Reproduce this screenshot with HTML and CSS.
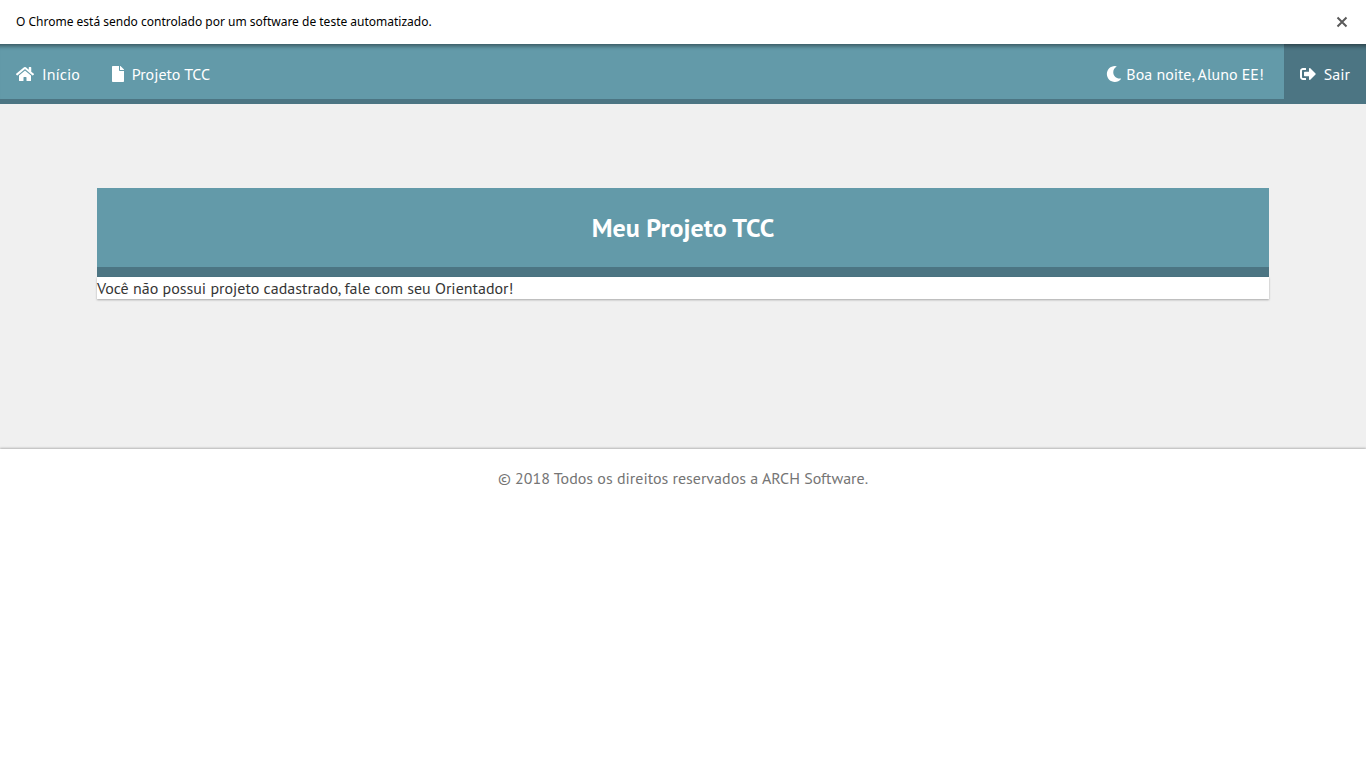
FILE: index.html
```html
<!DOCTYPE html>
<html lang="pt-BR">
<head>
<meta charset="utf-8">
<meta name="viewport" content="width=device-width, initial-scale=1">
<title>Meu Projeto TCC</title>
<link rel="stylesheet" href="styles.css">
</head>
<body>
<div class="infobar" role="status">
  <span class="infobar-text">O Chrome está sendo controlado por um software de teste automatizado.</span>
  <button class="infobar-close" type="button" aria-label="Fechar">
    <svg width="12" height="12" viewBox="0 0 12 12"><path d="M1.5 1.5l9 9M10.5 1.5l-9 9" stroke="#5a5a5a" stroke-width="2" fill="none"/></svg>
  </button>
</div>
<nav class="navbar">
  <a class="nav-item" href="#">
    <svg class="icon icon-home" viewBox="0 0 576 512"><path d="M280.37 148.26L96 300.11V464a16 16 0 0 0 16 16l112.06-.29a16 16 0 0 0 15.92-16V368a16 16 0 0 1 16-16h64a16 16 0 0 1 16 16v95.64a16 16 0 0 0 16 16.05L464 480a16 16 0 0 0 16-16V300L295.67 148.26a12.19 12.19 0 0 0-15.3 0zM571.6 251.47L488 182.56V44.05a12 12 0 0 0-12-12h-56a12 12 0 0 0-12 12v72.61L318.47 43a48 48 0 0 0-61 0L4.34 251.47a12 12 0 0 0-1.6 16.9l25.5 31A12 12 0 0 0 45.15 301l235.22-193.74a12.19 12.19 0 0 1 15.3 0L530.9 301a12 12 0 0 0 16.9-1.6l25.5-31a12 12 0 0 0-1.7-16.93z"/></svg>
    <span>Início</span>
  </a>
  <a class="nav-item" href="#">
    <svg class="icon icon-file" viewBox="0 0 384 512"><path d="M224 136V0H24C10.7 0 0 10.7 0 24v464c0 13.3 10.7 24 24 24h336c13.3 0 24-10.7 24-24V160H248c-13.2 0-24-10.8-24-24zm160-14.1v6.1H256V0h6.1c6.4 0 12.5 2.5 17 7l97.9 98c4.5 4.5 7 10.6 7 16.9z"/></svg>
    <span>Projeto TCC</span>
  </a>
  <div class="greeting">
    <svg class="icon" viewBox="0 0 512 512"><path d="M283.211 512c78.962 0 151.079-35.925 198.857-94.792 7.068-8.708-.639-21.43-11.562-19.35-124.203 23.654-238.262-71.576-238.262-196.954 0-72.222 38.662-138.635 101.498-174.394 9.686-5.512 7.25-20.197-3.756-22.23A258.156 258.156 0 0 0 283.211 0c-141.309 0-256 114.511-256 256 0 141.309 114.511 256 256 256z"/></svg>
    <span>Boa noite, Aluno EE!</span>
  </div>
  <a class="nav-item nav-exit" href="#">
    <svg class="icon" viewBox="0 0 512 512"><path d="M497 273L329 441c-15 15-41 4.500-41-17v-96H152c-13.300 0-24-10.700-24-24v-96c0-13.300 10.700-24 24-24h136V88c0-21.400 25.900-32 41-17l168 168c9.300 9.400 9.300 24.600 0 34zM192 436v-40c0-6.600-5.400-12-12-12H96c-17.700 0-32-14.300-32-32V160c0-17.700 14.300-32 32-32h84c6.600 0 12-5.400 12-12V76c0-6.600-5.400-12-12-12H96c-53 0-96 43-96 96v192c0 53 43 96 96 96h84c6.600 0 12-5.400 12-12z"/></svg>
    <span>Sair</span>
  </a>
</nav>
<main class="content">
  <section class="card">
    <h1 class="card-title">Meu Projeto TCC</h1>
    <p class="card-message">Você não possui projeto cadastrado, fale com seu Orientador!</p>
  </section>
</main>
<footer class="footer">© 2018 Todos os direitos reservados a ARCH Software.</footer>
</body>
</html>
```
FILE: styles.css
```css
* {
  box-sizing: border-box;
}

body {
  margin: 0;
  background: #fff;
  color: #363636;
  font-family: "PT Sans", "Noto Sans", sans-serif;
  font-size: 16px;
  line-height: 22px;
}

.infobar {
  display: flex;
  align-items: center;
  justify-content: space-between;
  height: 44px;
  padding: 0 16px;
  color: #000;
  font-family: "Segoe UI", "Noto Sans", sans-serif;
  font-size: 12px;
}

.infobar-close {
  display: flex;
  padding: 2px;
  border: 0;
  background: none;
}

.navbar {
  display: flex;
  height: 60px;
  border-bottom: 5px solid #4c7583;
  background: #639aa9;
  box-shadow: inset 0 6px 4px -4px rgba(0, 0, 0, 0.45);
  color: #fff;
}

.nav-item,
.greeting {
  display: flex;
  align-items: center;
  padding: 5px 16px 0;
}

.nav-item {
  gap: 8px;
  color: #fff;
  text-decoration: none;
}

.greeting {
  gap: 4px;
  margin-left: auto;
  padding-right: 20px;
}

.nav-exit {
  background: #4c7583;
  box-shadow: inset 0 6px 4px -4px rgba(0, 0, 0, 0.45);
}

.icon {
  width: 16px;
  height: 16px;
  fill: #fff;
}

.icon-home {
  width: 18px;
}

.icon-file {
  width: 12px;
}

.content {
  padding: 84px 97px 150px;
  background: #f0f0f0;
}

.card-title {
  margin: 0;
  padding: 24px;
  border-bottom: 10px solid #4c7583;
  background: #639aa9;
  color: #fff;
  font-size: 26px;
  line-height: 31px;
  text-align: center;
}

.card-message {
  margin: 0;
  background: #fff;
  box-shadow: 0 1px 2px rgba(0, 0, 0, 0.3);
}

.footer {
  position: relative;
  padding: 18px 16px;
  box-shadow: 0 -1px 2px rgba(0, 0, 0, 0.25);
  color: #757575;
  text-align: center;
}
```
